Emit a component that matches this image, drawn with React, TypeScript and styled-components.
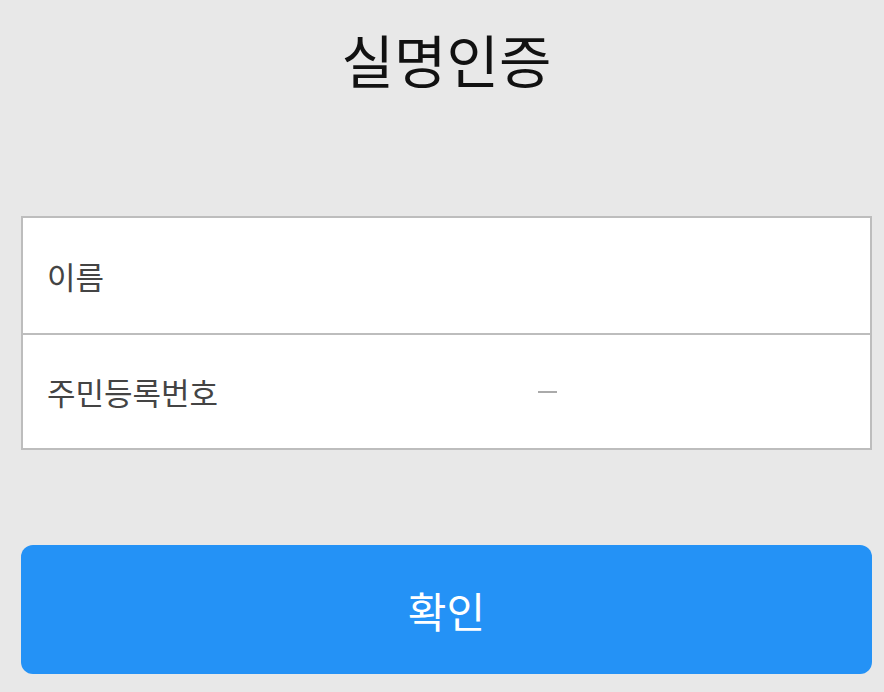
import React from 'react';
import styled, { createGlobalStyle } from 'styled-components';

const colors = {
  background: '#e8e8e8',
  border: '#bdbdbd',
  label: '#444444',
  dash: '#aaaaaa',
  primary: '#2492f6',
  text: '#111111',
};

const font = "'Noto Sans CJK KR', 'Noto Sans', sans-serif";

const GlobalStyle = createGlobalStyle`
  html, body {
    margin: 0;
    padding: 0;
    background: ${colors.background};
    font-family: ${font};
  }
`;

const Page = styled.main`
  width: 884px;
  height: 692px;
  box-sizing: border-box;
  padding: 0 12px 0 21px;
  display: flex;
  flex-direction: column;
  background: ${colors.background};
`;

const Title = styled.h1`
  margin: 0;
  height: 116px;
  display: flex;
  align-items: center;
  justify-content: center;
  font-size: 57px;
  font-weight: 400;
  color: ${colors.text};
`;

const FormBox = styled.section`
  margin-top: 100px;
  background: #ffffff;
  border: 2px solid ${colors.border};
  display: flex;
  flex-direction: column;
`;

const Row = styled.div<{ $divider?: boolean }>`
  height: 115px;
  box-sizing: border-box;
  padding: 0 24px;
  display: grid;
  grid-template-columns: 202px 1fr 19px 1fr;
  align-items: center;
  border-top: ${(p) => (p.$divider ? `2px solid ${colors.border}` : 'none')};
`;

const Label = styled.label`
  font-size: 31px;
  color: ${colors.label};
  white-space: nowrap;
`;

const Input = styled.input<{ $wide?: boolean }>`
  grid-column: ${(p) => (p.$wide ? '2 / 5' : 'auto')};
  border: none;
  outline: none;
  background: transparent;
  font-family: ${font};
  font-size: 31px;
  color: ${colors.label};
  min-width: 0;
`;

const Dash = styled.span`
  height: 2px;
  background: ${colors.dash};
`;

const Button = styled.button`
  margin-top: 95px;
  height: 129px;
  border: none;
  border-radius: 12px;
  background: ${colors.primary};
  color: #ffffff;
  font-family: ${font};
  font-size: 42px;
  font-weight: 400;
  cursor: pointer;
`;

const App: React.FC = () => {
  return (
    <>
      <GlobalStyle />
      <Page>
        <Title>실명인증</Title>
        <FormBox>
          <Row>
            <Label>이름</Label>
            <Input $wide />
          </Row>
          <Row $divider>
            <Label>주민등록번호</Label>
            <Input />
            <Dash role="separator" />
            <Input type="password" />
          </Row>
        </FormBox>
        <Button>확인</Button>
      </Page>
    </>
  );
};

export default App;
